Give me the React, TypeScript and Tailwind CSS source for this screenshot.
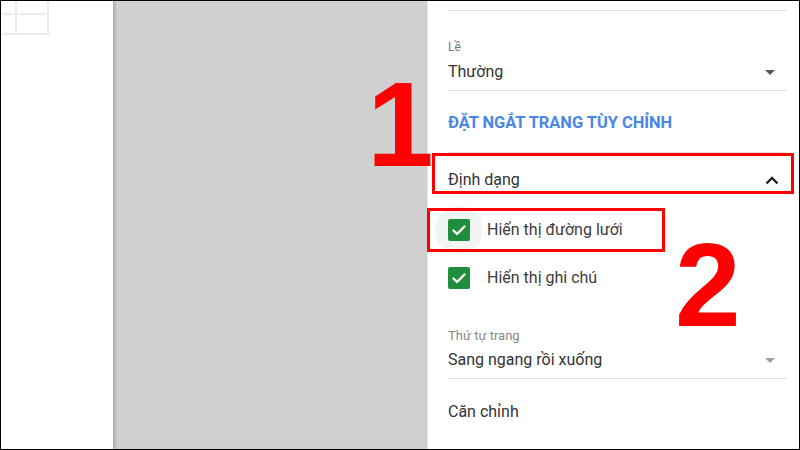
import React from "react";

function CaretDown({ light }: { light?: boolean }) {
  return (
    <svg width="10" height="5" viewBox="0 0 10 5" className={light ? "text-[#9e9e9e]" : "text-[#555]"}>
      <path d="M0 0h10L5 5z" fill="currentColor" />
    </svg>
  );
}

function Check() {
  return (
    <div className="w-[22px] h-[22px] rounded-[2px] bg-[#1e8e3e] flex items-center justify-center">
      <svg width="16" height="16" viewBox="0 0 16 16" fill="none">
        <path d="M2.5 8.5l3.5 3.5 7.5-7.5" stroke="#fff" strokeWidth="2.4" strokeLinecap="round" strokeLinejoin="round" />
      </svg>
    </div>
  );
}

export default function App() {
  const font = { fontFamily: "Roboto, 'Noto Sans', Arial, sans-serif" };
  return (
    <div className="w-[800px] h-[450px] relative overflow-hidden border border-black bg-white flex" style={font}>
      {/* sheet area */}
      <div className="w-[112px] h-full bg-white relative">
        <div className="absolute left-0 top-0 w-[48px] h-[34px] grid grid-cols-[16px_29px] grid-rows-[14px_18px] border-r-2 border-b-2 border-[#ececec]">
          <div className="border-r-2 border-b-2 border-[#ececec]" />
          <div className="border-b-2 border-[#ececec]" />
          <div className="border-r-2 border-[#ececec]" />
          <div />
        </div>
      </div>

      {/* gray backdrop */}
      <div className="w-[314px] h-full bg-[#d0d0d0] flex">
        <div className="w-[4px] h-full bg-gradient-to-r from-[#a9a9a9] to-[#d0d0d0]" />
      </div>

      {/* side panel */}
      <div className="flex-1 h-full bg-white border-l border-[#e6e6e6] pl-5 pr-[13px] flex flex-col text-[#333]">
        <div className="h-[10px] border-b border-[#e0e0e0] shrink-0" />

        <div className="pt-[28px] pb-[6px] border-b border-[#e0e0e0]">
          <div className="text-[12px] leading-4 text-[#777]">Lề</div>
          <div className="mt-[5px] flex items-center justify-between pr-[11px]">
            <span className="text-[16px] leading-6">Thường</span>
            <CaretDown />
          </div>
        </div>

        <div className="pt-[22px] pb-[19px] border-b border-[#e0e0e0]">
          <div className="text-[16.4px] leading-5 font-bold text-[#4a86e8]">ĐẶT NGẮT TRANG TÙY CHỈNH</div>
        </div>

        <div className="pt-[15px] flex items-center justify-between pr-[7px]">
          <span className="text-[16px] leading-6">Định dạng</span>
          <svg width="14" height="9" viewBox="0 0 14 9" fill="none">
            <path d="M1.5 7.5L7 2l5.5 5.5" stroke="#222" strokeWidth="2.4" />
          </svg>
        </div>

        <div className="mt-[14px] flex flex-col">
          <div className="h-12 flex items-center">
            <div className="w-12 h-12 -ml-[13px] rounded-full bg-[#f3f4f4] flex items-center justify-center">
              <Check />
            </div>
            <span className="ml-[4px] text-[16px] leading-6 text-[#3c3c3c]">Hiển thị đường lưới</span>
          </div>
          <div className="h-12 flex items-center">
            <div className="w-12 h-12 -ml-[13px] flex items-center justify-center">
              <Check />
            </div>
            <span className="ml-[4px] text-[16px] leading-6 text-[#3c3c3c]">Hiển thị ghi chú</span>
          </div>
        </div>

        <div className="mt-[26px] pb-[6px] border-b border-[#e0e0e0]">
          <div className="text-[13px] leading-4 text-[#888]">Thứ tự trang</div>
          <div className="mt-[4px] flex items-center justify-between pr-[11px]">
            <span className="text-[16px] leading-6">Sang ngang rồi xuống</span>
            <CaretDown light />
          </div>
        </div>

        <div className="mt-[21px] text-[16px] leading-6">Căn chỉnh</div>
      </div>

      {/* annotations */}
      <div className="absolute left-[431px] top-[152px] w-[362px] h-[41px] border-[3px] border-[#ff0000]" />
      <div className="absolute left-[426px] top-[207px] w-[238px] h-[44px] border-[3px] border-[#ff0000]" />
      <div
        className="absolute left-[366px] top-[58px] text-[120px] leading-[130px] font-bold text-[#ff0000]"
        style={{ fontFamily: "'Liberation Sans', Arial, sans-serif" }}
      >
        1
      </div>
      <div
        className="absolute left-[674px] top-[220px] text-[118px] leading-[128px] font-bold text-[#ff0000]"
        style={{ fontFamily: "'Liberation Sans', Arial, sans-serif" }}
      >
        2
      </div>
    </div>
  );
}
